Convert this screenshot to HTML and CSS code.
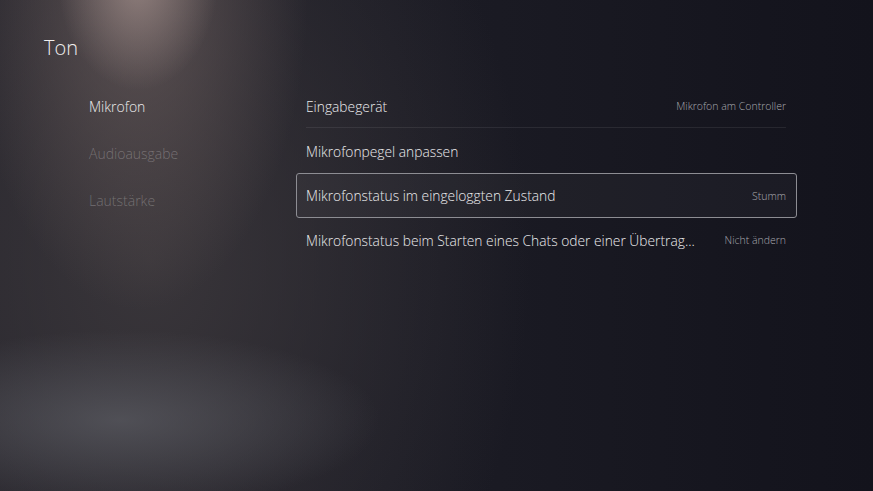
FILE: index.html
```html
<!DOCTYPE html>
<html lang="de">
<head>
  <meta charset="UTF-8">
  <title>Ton</title>
  <link rel="stylesheet" href="styles.css">
</head>
<body>

  <!-- SCREEN -->
  <div id="screen">

    <h1 class="page-title">Ton</h1>

    <div class="settings">

      <!-- LEFT NAV -->
      <ul class="side-nav">
        <li class="active">Mikrofon</li>
        <li>Audioausgabe</li>
        <li>Lautstärke</li>
      </ul>

      <!-- OPTIONS -->
      <ul class="option-list">
        <li class="option divided">
          <span class="option-label">Eingabegerät</span>
          <span class="option-value">Mikrofon am Controller</span>
        </li>
        <li class="option">
          <span class="option-label">Mikrofonpegel anpassen</span>
        </li>
        <li class="option focused">
          <span class="option-label">Mikrofonstatus im eingeloggten Zustand</span>
          <span class="option-value">Stumm</span>
        </li>
        <li class="option">
          <span class="option-label">Mikrofonstatus beim Starten eines Chats oder einer Übertrag...</span>
          <span class="option-value">Nicht ändern</span>
        </li>
      </ul>

    </div>
  </div>

</body>
</html>
```
FILE: styles.css
```css
html, body {
  margin: 0;
  padding: 0;
  height: 100%;
}

body {
  font-family: "Open Sans", "Noto Sans", sans-serif;
  font-weight: 300;
  color: #e8e8ea;
  background-color: #15151e;
  background-image:
    radial-gradient(ellipse 80px 110px at 138px -20px, rgba(170, 150, 146, 0.65), rgba(170, 150, 146, 0) 100%),
    radial-gradient(ellipse 170px 320px at 138px -10px, rgba(112, 98, 97, 0.7), rgba(112, 98, 97, 0) 100%),
    radial-gradient(ellipse 260px 90px at 120px 420px, rgba(96, 97, 104, 0.65), rgba(96, 97, 104, 0) 100%),
    radial-gradient(ellipse 380px 520px at 150px 260px, rgba(60, 56, 60, 0.9), rgba(60, 56, 60, 0) 100%),
    linear-gradient(90deg, #23222a 0%, #1c1c25 45%, #13131c 100%);
  overflow: hidden;
}

#screen {
  width: 873px;
  height: 491px;
  box-sizing: border-box;
  padding: 34px 0 0 44px;
}

.page-title {
  margin: 0;
  font-size: 20px;
  font-weight: 300;
  line-height: 28px;
  color: #f0eeee;
}

.settings {
  display: flex;
  margin-top: 22px;
}

ul {
  list-style: none;
  margin: 0;
  padding: 0;
}

.side-nav {
  width: 207px;
  margin-top: -1px;
  padding-left: 45px;
  flex-shrink: 0;
}

.side-nav li {
  height: 47px;
  line-height: 47px;
  font-size: 14px;
  color: rgba(255, 255, 255, 0.26);
}

.side-nav li.active {
  color: #ecebeb;
}

.option-list {
  width: 501px;
}

.option {
  display: flex;
  justify-content: space-between;
  align-items: center;
  height: 44px;
  padding: 0 10px 0 9px;
  box-sizing: border-box;
  border: 1px solid transparent;
  border-radius: 3px;
  margin: 0 0 1px;
}

.option.divided {
  position: relative;
}

.option.divided::after {
  content: "";
  position: absolute;
  left: 9px;
  right: 10px;
  bottom: -1px;
  height: 1px;
  background: rgba(255, 255, 255, 0.08);
}

.option.focused {
  height: 45px;
  border: 1.5px solid #8d8d93;
  background: rgba(255, 255, 255, 0.03);
  margin: -1px 0 0;
}

.option-label {
  font-size: 13.8px;
  color: #ebebed;
  white-space: nowrap;
}

.option-value {
  font-size: 10.5px;
  color: #a9a9af;
  white-space: nowrap;
}
```
